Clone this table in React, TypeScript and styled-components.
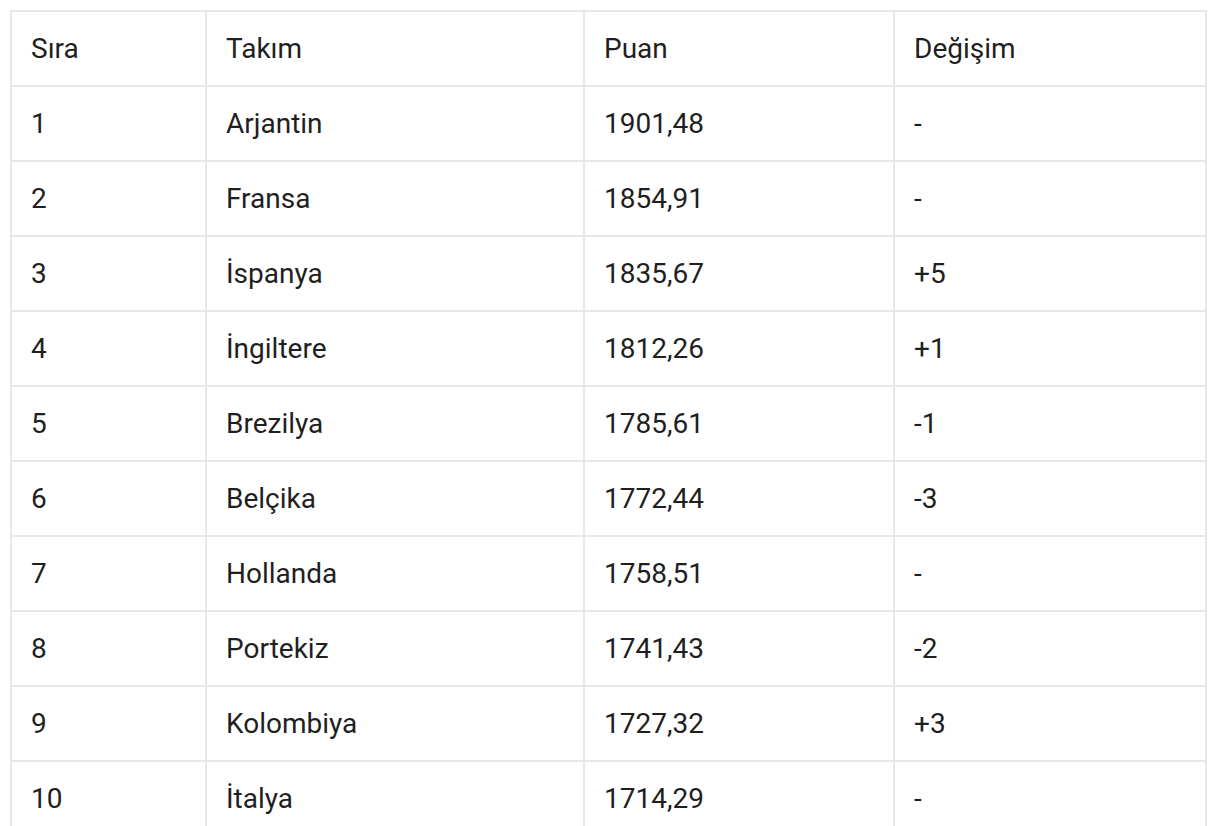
import React from "react";
import styled, { createGlobalStyle } from "styled-components";

const GlobalStyle = createGlobalStyle`
  html, body {
    margin: 0;
    padding: 0;
    background: #ffffff;
  }
  body {
    font-family: Roboto, "Noto Sans", "Liberation Sans", sans-serif;
    color: #1f1f1f;
  }
`;

const Page = styled.div`
  padding: 10px;
`;

const Table = styled.table`
  width: 1197px;
  table-layout: fixed;
  border-collapse: separate;
  border-spacing: 0;
  border-top: 2px solid #e8e8e8;
  border-left: 2px solid #e8e8e8;
  font-size: 28px;
  line-height: 1;
`;

const Row = styled.tr`
  height: 75px;
`;

const Cell = styled.td`
  padding: 0 19px;
  border-right: 2px solid #e8e8e8;
  border-bottom: 2px solid #e8e8e8;
  vertical-align: middle;
  text-align: left;
  font-weight: 400;
  white-space: nowrap;
`;

const HeadCell = styled(Cell).attrs({ as: "th" })``;

const rows: [string, string, string, string][] = [
  ["1", "Arjantin", "1901,48", "-"],
  ["2", "Fransa", "1854,91", "-"],
  ["3", "İspanya", "1835,67", "+5"],
  ["4", "İngiltere", "1812,26", "+1"],
  ["5", "Brezilya", "1785,61", "-1"],
  ["6", "Belçika", "1772,44", "-3"],
  ["7", "Hollanda", "1758,51", "-"],
  ["8", "Portekiz", "1741,43", "-2"],
  ["9", "Kolombiya", "1727,32", "+3"],
  ["10", "İtalya", "1714,29", "-"],
];

export default function App() {
  return (
    <>
      <GlobalStyle />
      <Page>
        <Table>
          <colgroup>
            <col style={{ width: 195 }} />
            <col style={{ width: 378 }} />
            <col style={{ width: 310 }} />
            <col style={{ width: 312 }} />
          </colgroup>
          <thead>
            <Row>
              <HeadCell>Sıra</HeadCell>
              <HeadCell>Takım</HeadCell>
              <HeadCell>Puan</HeadCell>
              <HeadCell>Değişim</HeadCell>
            </Row>
          </thead>
          <tbody>
            {rows.map((r) => (
              <Row key={r[0]}>
                {r.map((c, i) => (
                  <Cell key={i}>{c}</Cell>
                ))}
              </Row>
            ))}
          </tbody>
        </Table>
      </Page>
    </>
  );
}
